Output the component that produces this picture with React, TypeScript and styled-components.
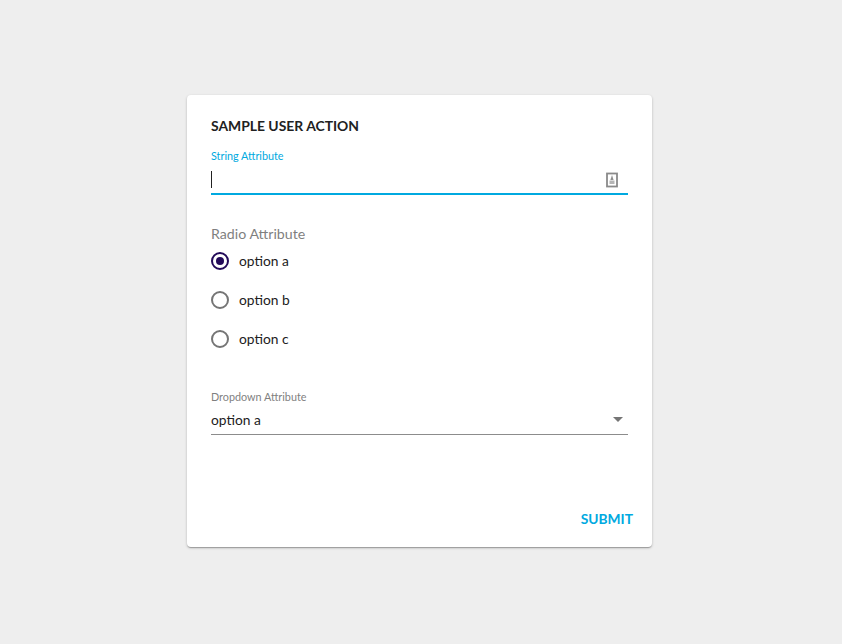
import React from "react";
import styled, { createGlobalStyle } from "styled-components";

const Global = createGlobalStyle`
  html, body { margin: 0; padding: 0; height: 100%; background: #eeeeee; }
  #root { height: 100%; }
  * { box-sizing: border-box; }
`;

const Page = styled.div`
  width: 842px;
  height: 644px;
  padding: 95px 0 0 187px;
  display: flex;
  align-items: flex-start;
  font-family: Lato, sans-serif;
  background: #eeeeee;
`;

const Card = styled.form`
  width: 465px;
  height: 452px;
  background: #fff;
  border-radius: 4px;
  box-shadow: 0 1px 3px rgba(0,0,0,.2), 0 1px 1px rgba(0,0,0,.14), 0 2px 1px -1px rgba(0,0,0,.12);
  padding: 22px 24px 0;
  display: flex;
  flex-direction: column;
`;

const Title = styled.h2`
  margin: 0;
  font-size: 13.9px;
  line-height: 18px;
  font-weight: 700;
  color: #212121;
`;

const FieldLabel = styled.label<{ $active?: boolean }>`
  display: block;
  font-size: 10.8px;
  line-height: 14px;
  color: ${(p) => (p.$active ? "#00a9e0" : "#7f7f7f")};
`;

const StringLabel = styled(FieldLabel)`
  margin-top: 14px;
`;

const InputRow = styled.div`
  height: 31px;
  margin-top: 1px;
  width: 417px;
  display: flex;
  align-items: center;
  justify-content: space-between;
  border-bottom: 2px solid #00a9e0;
  padding: 1px 9px 0 0;
`;

const Caret = styled.span`
  width: 1px;
  height: 17px;
  background: #212121;
`;

const IconSvg = styled.svg`
  width: 14px;
  height: 16px;
  margin-top: 1px;
`;

const Legend = styled.div`
  margin-top: 30px;
  font-size: 14.2px;
  line-height: 18px;
  color: #7f7f7f;
`;

const RadioList = styled.div`
  display: flex;
  flex-direction: column;
  margin-top: -2px;
`;

const RadioRow = styled.div`
  height: 39px;
  display: flex;
  align-items: center;
  gap: 10px;
  font-size: 13.8px;
  color: #212121;
`;

const RadioCircle = styled.span<{ $checked?: boolean }>`
  width: 18px;
  height: 18px;
  border-radius: 50%;
  border: 2px solid ${(p) => (p.$checked ? "#230a59" : "#757575")};
  display: flex;
  align-items: center;
  justify-content: center;
  &::after {
    content: "";
    display: ${(p) => (p.$checked ? "block" : "none")};
    width: 8px;
    height: 8px;
    border-radius: 50%;
    background: #230a59;
  }
`;

const SelectLabel = styled(FieldLabel)`
  margin-top: 32px;
`;

const SelectRow = styled.div`
  width: 417px;
  height: 31px;
  display: flex;
  align-items: center;
  justify-content: space-between;
  border-bottom: 1px solid #8c8c8c;
  font-size: 13.8px;
  color: #212121;
  padding-right: 5px;
`;

const Arrow = styled.span`
  width: 0;
  height: 0;
  border-left: 5px solid transparent;
  border-right: 5px solid transparent;
  border-top: 5px solid #757575;
  margin-top: 1px;
`;

const Actions = styled.div`
  margin-top: auto;
  display: flex;
  justify-content: flex-end;
  margin-right: -5px;
  padding-bottom: 19px;
`;

const Submit = styled.button`
  border: 0;
  background: none;
  padding: 0;
  font-family: inherit;
  font-size: 13.8px;
  line-height: 18px;
  font-weight: 700;
  color: #00a9e0;
`;

const options = [
  { label: "option a", checked: true },
  { label: "option b", checked: false },
  { label: "option c", checked: false },
];

const ContactIcon = () => (
  <IconSvg viewBox="0 0 14 16" aria-hidden="true">
    <rect x="2" y="1.5" width="10" height="13" fill="none" stroke="#8a8a8a" strokeWidth="1.8" />
    <path d="M7 3 L8.6 8 H5.4 Z" fill="#8f8f8f" />
    <rect x="4.5" y="8.5" width="5" height="3.5" fill="#b5b5b5" />
  </IconSvg>
);

export default function App() {
  return (
    <Page>
      <Global />
      <Card onSubmit={(e) => e.preventDefault()}>
        <Title>SAMPLE USER ACTION</Title>
        <StringLabel $active>String Attribute</StringLabel>
        <InputRow>
          <Caret />
          <ContactIcon />
        </InputRow>
        <Legend>Radio Attribute</Legend>
        <RadioList>
          {options.map((o) => (
            <RadioRow key={o.label}>
              <RadioCircle $checked={o.checked} />
              {o.label}
            </RadioRow>
          ))}
        </RadioList>
        <SelectLabel>Dropdown Attribute</SelectLabel>
        <SelectRow>
          option a
          <Arrow />
        </SelectRow>
        <Actions>
          <Submit type="submit">SUBMIT</Submit>
        </Actions>
      </Card>
    </Page>
  );
}
